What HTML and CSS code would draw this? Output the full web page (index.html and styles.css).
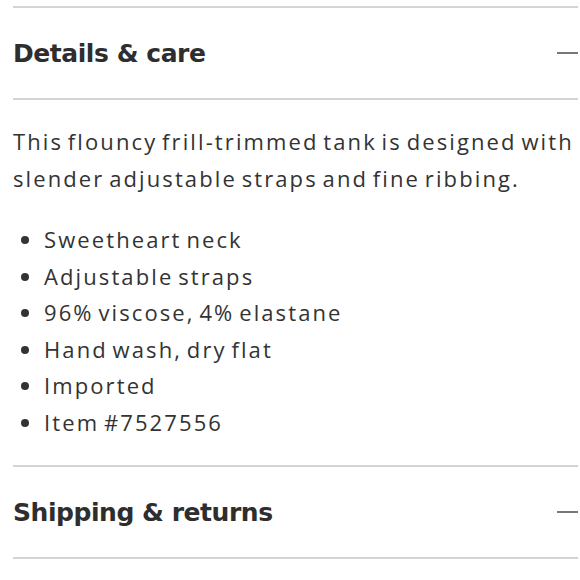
FILE: index.html
```html
<!DOCTYPE html>
<html>
<head>
<meta charset="utf-8">
<link rel="stylesheet" href="styles.css">
</head>
<body>
<div class="accordion">
  <section class="item open">
    <div class="header">
      <h2 class="title">Details &amp; care</h2>
      <span class="dash"></span>
    </div>
    <div class="panel">
      <p class="desc">This flouncy frill-trimmed tank is designed with slender adjustable straps and fine ribbing.</p>
      <ul class="list">
        <li>Sweetheart neck</li>
        <li>Adjustable straps</li>
        <li>96% viscose, 4% elastane</li>
        <li>Hand wash, dry flat</li>
        <li>Imported</li>
        <li>Item #7527556</li>
      </ul>
    </div>
  </section>
  <section class="item">
    <div class="header">
      <h2 class="title">Shipping &amp; returns</h2>
      <span class="dash"></span>
    </div>
  </section>
</div>
</body>
</html>
```
FILE: styles.css
```css
html, body {
  margin: 0;
  padding: 0;
  background: #fff;
}
.accordion {
  padding: 6px 2px 0 13px;
  color: #333;
}
.item {
  border-top: 2px solid #d4d4d8;
}
.item:last-child {
  border-bottom: 2px solid #d4d4d8;
}
.header {
  height: 90px;
  display: flex;
  align-items: center;
  justify-content: space-between;
}
.title {
  margin: 0;
  font-family: "DejaVu Sans", "Liberation Sans", sans-serif;
  font-weight: 700;
  font-size: 25px;
  letter-spacing: -0.45px;
  color: #2e2e2e;
}
.dash {
  width: 21px;
  height: 2px;
  background: #777;
}
.panel {
  border-top: 2px solid #d4d4d8;
  padding: 23px 0 25px;
  font-family: "Open Sans", sans-serif;
  font-size: 22px;
  line-height: 36.5px;
  letter-spacing: 2.1px;
  word-spacing: -3px;
  color: #333;
}
.desc {
  margin: 0 0 25px;
}
.list {
  margin: 0;
  padding: 0 0 0 31px;
}
</style>
```
